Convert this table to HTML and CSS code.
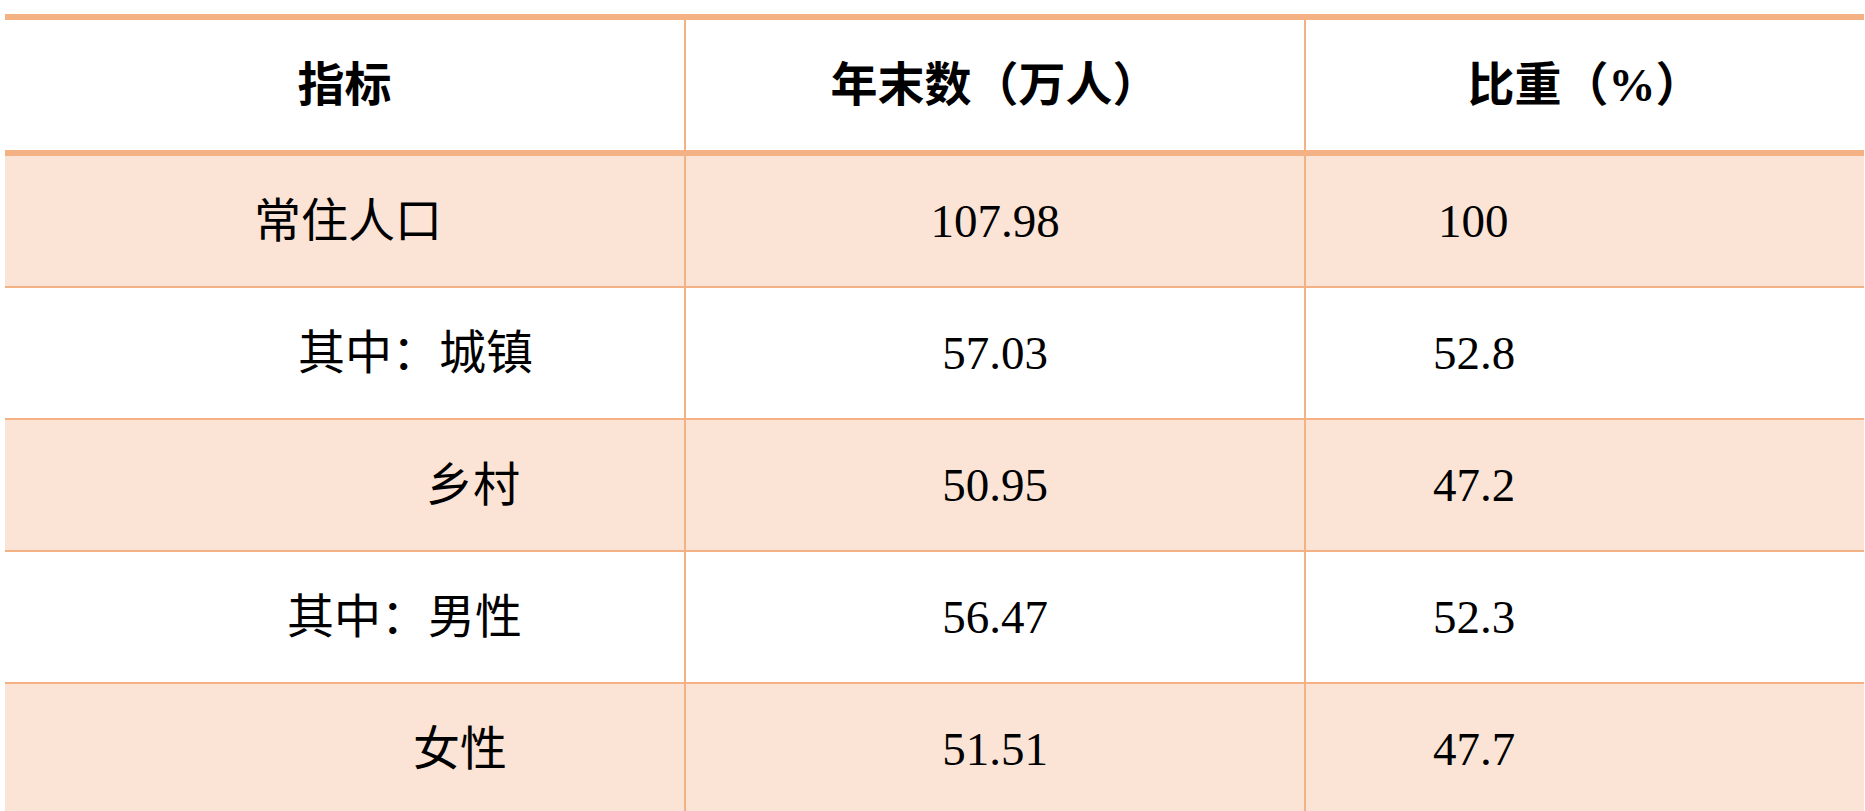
FILE: index.html
```html
<!DOCTYPE html>
<html lang="zh-CN">
<head>
<meta charset="utf-8">
<title>人口指标</title>
<link rel="stylesheet" href="styles.css">
</head>
<body>
<table class="stats">
  <colgroup>
    <col class="c1">
    <col class="c2">
    <col class="c3">
  </colgroup>
  <thead>
    <tr>
      <th class="col-name">指标</th>
      <th class="col-num">年末数（万人）</th>
      <th class="col-pct">比重（<span class="latin">%</span>）</th>
    </tr>
  </thead>
  <tbody>
    <tr class="shaded">
      <td class="name ind-a">常住人口</td>
      <td class="num">107.98</td>
      <td class="pct pct-total">100</td>
    </tr>
    <tr>
      <td class="name ind-b">其中：城镇</td>
      <td class="num">57.03</td>
      <td class="pct">52.8</td>
    </tr>
    <tr class="shaded">
      <td class="name ind-c">乡村</td>
      <td class="num">50.95</td>
      <td class="pct">47.2</td>
    </tr>
    <tr>
      <td class="name ind-d">其中：男性</td>
      <td class="num">56.47</td>
      <td class="pct">52.3</td>
    </tr>
    <tr class="shaded">
      <td class="name ind-e">女性</td>
      <td class="num">51.51</td>
      <td class="pct">47.7</td>
    </tr>
  </tbody>
</table>
</body>
</html>
```

FILE: styles.css
```css
html, body {
  margin: 0;
  padding: 0;
  height: 811px;
  overflow: hidden;
  background: #ffffff;
}

.stats {
  margin: 14px 0 0 5px;
  width: 1859px;
  table-layout: fixed;
  border-collapse: separate;
  border-spacing: 0;
  font-family: "Liberation Serif", "Noto Sans CJK SC", serif;
  font-size: 47px;
  color: #000000;
}

.c1 { width: 679px; }
.c2 { width: 620px; }
.c3 { width: 560px; }

.stats th,
.stats td {
  padding: 0;
  vertical-align: middle;
  line-height: 1;
  box-sizing: border-box;
}

.stats th {
  height: 142px;
  border-top: 6px solid #f4b183;
  border-bottom: 6px solid #f4b183;
  font-weight: 700;
  text-align: center;
}

.latin {
  font-family: "Liberation Serif", serif;
  font-weight: 700;
}

.stats td {
  height: 132px;
  border-bottom: 2px solid #f4b183;
  font-weight: 400;
}

.stats th + th,
.stats td + td {
  border-left: 2px solid #f4b183;
}

.shaded td {
  background: #fbe4d5;
}

.name {
  text-align: left;
  white-space: nowrap;
}

.ind-a { padding-left: 249px !important; }
.ind-b { padding-left: 293px !important; }
.ind-c { padding-left: 421px !important; }
.ind-d { padding-left: 282px !important; }
.ind-e { padding-left: 408px !important; }

.num {
  text-align: center;
}

.pct {
  text-align: left;
  padding-left: 127px !important;
}

.pct-total {
  padding-left: 132px !important;
}
```
